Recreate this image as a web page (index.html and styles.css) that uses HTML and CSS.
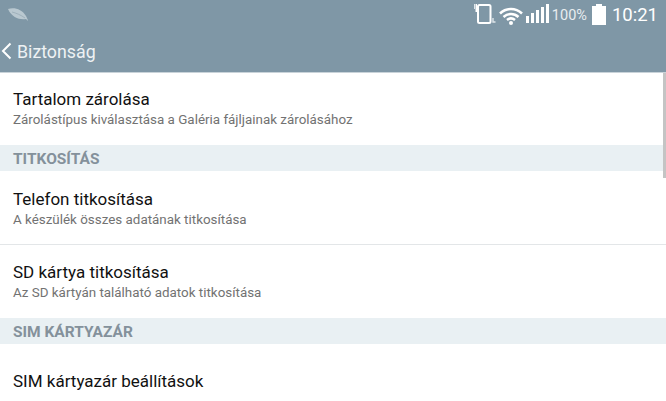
FILE: index.html
```html
<!DOCTYPE html>
<html lang="hu">
<head>
    <meta charset="UTF-8">
    <meta name="viewport" content="width=device-width, initial-scale=1.0">
    <title>Biztonság</title>
    <link rel="stylesheet" href="styles.css">
</head>
<body>
    <div class="header">
        <div class="statusBar">
            <svg class="leaf" width="22" height="16" viewBox="0 0 22 16">
                <path d="M1 2C7 0 15 2 19 9C20 11 21 13 21 14L19 12C13 13 5 11 1 2Z" fill="#b9c8d0"/>
                <path d="M5 5C9 6 14 8 18 11" stroke="#94a6b1" stroke-width="0.7" fill="none"/>
            </svg>
            <div class="statusIcons">
                <svg class="vibrate" width="22" height="22" viewBox="0 0 22 22">
                    <rect x="0" y="1" width="1" height="5" fill="#dfe6ea"/>
                    <rect x="1.500" y="1" width="1.500" height="8" fill="#fff"/>
                    <rect x="4" y="2" width="12.500" height="18" rx="1.500" fill="none" stroke="#fff" stroke-width="2"/>
                    <path d="M19 15V19H21.500" stroke="#dfe6ea" stroke-width="1.400" fill="none"/>
                </svg>
                <svg class="wifi" width="24" height="20" viewBox="0 0 24 20">
                    <path d="M1 7.500C7.500 1.500 16.500 1.500 23 7.500" stroke="#fff" stroke-width="2.600" fill="none"/>
                    <path d="M4.500 11C9 7 15 7 19.500 11" stroke="#fff" stroke-width="2.600" fill="none"/>
                    <path d="M8 14C10.500 12 13.500 12 16 14" stroke="#fff" stroke-width="2.600" fill="none"/>
                    <circle cx="12" cy="17" r="2" fill="#fff"/>
                </svg>
                <svg class="signal" width="23" height="19" viewBox="0 0 23 19">
                    <rect x="0" y="12" width="3" height="7" fill="#fff"/>
                    <rect x="5" y="9" width="3" height="10" fill="#fff"/>
                    <rect x="10" y="6" width="3" height="13" fill="#fff"/>
                    <rect x="15" y="3" width="3" height="16" fill="#fff"/>
                    <rect x="20" y="0" width="3" height="19" fill="#fff"/>
                </svg>
                <span class="percent">100%</span>
                <svg class="battery" width="14" height="21" viewBox="0 0 14 21">
                    <path d="M4 0H10V2H14V21H0V2H4Z" fill="#fff"/>
                </svg>
                <span class="clock">10:21</span>
            </div>
        </div>
        <div class="titleBar">
            <svg class="back" width="11" height="18" viewBox="0 0 11 18">
                <path d="M9.500 1.500L2 9L9.500 16.500" stroke="#fff" stroke-width="2" fill="none"/>
            </svg>
            <span class="title">Biztonság</span>
        </div>
    </div>

    <div class="list">
        <div class="scrollThumb"></div>
        <div class="row first">
            <div class="rowTitle">Tartalom zárolása</div>
            <div class="rowSub">Zárolástípus kiválasztása a Galéria fájljainak zárolásához</div>
        </div>
        <div class="section">TITKOSÍTÁS</div>
        <div class="row divided">
            <div class="rowTitle">Telefon titkosítása</div>
            <div class="rowSub">A készülék összes adatának titkosítása</div>
        </div>
        <div class="row">
            <div class="rowTitle">SD kártya titkosítása</div>
            <div class="rowSub">Az SD kártyán található adatok titkosítása</div>
        </div>
        <div class="section">SIM KÁRTYAZÁR</div>
        <div class="row last">
            <div class="rowTitle">SIM kártyazár beállítások</div>
        </div>
    </div>
</body>
</html>
```

FILE: styles.css
```css
html, body{
    margin: 0;
    padding: 0;
    height: 100%;
    overflow: hidden;
    background: #fff;
    font-family: Roboto, "Liberation Sans", sans-serif;
}
.header{
    height: 72px;
    background: #7f97a6;
    border-bottom: 1px solid #c9d3d9;
}
.statusBar{
    display: flex;
    justify-content: space-between;
    height: 30px;
    padding: 3px 8px 0 7px;
    box-sizing: border-box;
}
.leaf{
    margin-top: 4px;
}
.statusIcons{
    display: flex;
    align-items: flex-start;
    color: #fff;
}
.wifi{
    margin: 3px 0 0 3px;
}
.signal{
    margin: 1px 0 0 3px;
}
.percent{
    margin: 4px 0 0 3px;
    font-size: 14.500px;
    line-height: 17px;
    color: #e8edf0;
}
.battery{
    margin: 1px 0 0 5px;
}
.clock{
    margin: 1px 0 0 6px;
    font-size: 18.500px;
    line-height: 22px;
}
.titleBar{
    display: flex;
    align-items: center;
    height: 42px;
    padding: 0 0 0 1px;
    box-sizing: border-box;
    color: #eef2f4;
}
.title{
    margin-left: 5px;
    font-size: 17.800px;
}
.list{
    position: relative;
}
.scrollThumb{
    position: absolute;
    top: 0;
    right: 0;
    width: 3px;
    height: 105px;
    background: #c4c4c4;
}
.row{
    height: 73px;
    padding: 17px 13px 0;
    box-sizing: border-box;
}
.row.first{
    height: 72px;
    padding-top: 16px;
}
.row.divided{
    height: 74px;
    padding-top: 18px;
    border-bottom: 1px solid #e3e6e8;
}
.row.last{
    padding-top: 27px;
}
.rowTitle{
    font-size: 17px;
    line-height: 20px;
    color: #111;
}
.rowSub{
    margin-top: 3px;
    font-size: 13.400px;
    line-height: 16px;
    color: #727272;
}
.section{
    height: 26px;
    padding-left: 13px;
    background: #e9f0f3;
    font-size: 15.500px;
    font-weight: 700;
    line-height: 28px;
    color: #84919b;
}
```
